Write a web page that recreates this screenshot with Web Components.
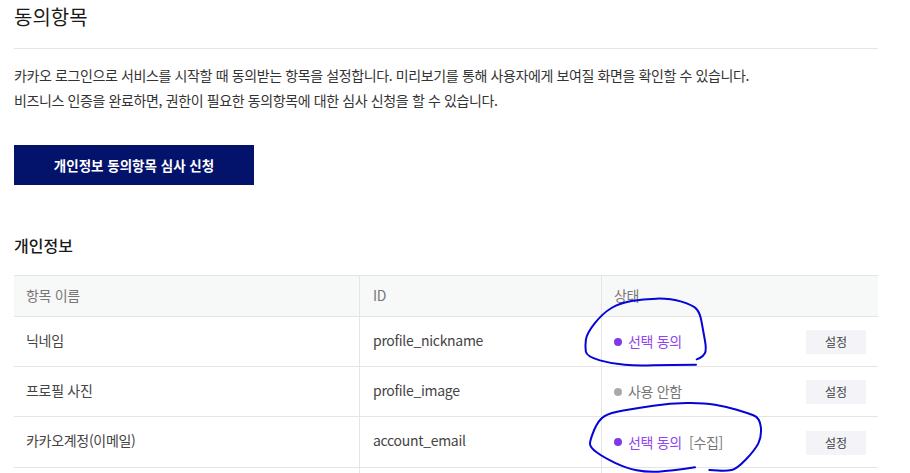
<!DOCTYPE html>
<html lang="ko">
<head>
<meta charset="utf-8">
<title>동의항목</title>
<style>
    html, body { margin: 0; height: 473px; overflow: hidden; background: #fff; }
    body { font-family: "Noto Sans CJK KR", "Noto Sans", sans-serif; color: #333; }
</style>
</head>
<body>
<consent-page>
    <consent-table>
        <consent-row name="닉네임" item-id="profile_nickname" status="on">선택 동의</consent-row>
        <consent-row name="프로필 사진" item-id="profile_image" status="off">사용 안함</consent-row>
        <consent-row name="카카오계정(이메일)" item-id="account_email" status="on" extra="[수집]">선택 동의</consent-row>
        <consent-row blank></consent-row>
    </consent-table>
</consent-page>
<ink-mark points="696,364.7 670,364.7 636.7,365.7 613,364 586.7,356.7 585,346.7 586.7,333.3 603,313 620,303 643,299 670,298.3 693,305 700,313 703,330 706.7,350 703,356.7 696.7,359.3"></ink-mark>
<ink-mark points="695,467.3 670,471 646.7,472.3 626.7,468.3 603.3,457.3 590,447.3 590,440 598.3,420 610,412.7 636.7,408.3 670,403.3 703.3,402.7 726.7,406.7 746.7,412.7 760,417.7 761.7,436.7 755,450 736.7,469 726.7,471 709.3,470"></ink-mark>
<script>
class ConsentPage extends HTMLElement {
    connectedCallback() {
        this.attachShadow({ mode: 'open' }).innerHTML = `
<style>
    :host { display: block; padding: 0 32px 0 14px; }
    h1 { margin: 0; height: 49px; box-sizing: border-box; padding-top: 2px; font-size: 20px; line-height: 30px; font-weight: 400; color: #1a1a1a; border-bottom: 1px solid #e5e5e5; }
    p { margin: 14px 0 0; font-size: 14px; line-height: 25px; color: #333; letter-spacing: -0.38px; }
    button { display: block; margin-top: 32px; width: 240px; height: 40px; padding: 0; border: 0; background: #03126b; color: #fff; font: 700 13.5px/40px "Noto Sans CJK KR", sans-serif; }
    h2 { margin: 48px 0 0; font-size: 16px; line-height: 24px; font-weight: 500; color: #1a1a1a; }
    .table { margin-top: 18px; }
</style>
<h1>동의항목</h1>
<p>카카오 로그인으로 서비스를 시작할 때 동의받는 항목을 설정합니다. 미리보기를 통해 사용자에게 보여질 화면을 확인할 수 있습니다.<br>비즈니스 인증을 완료하면, 권한이 필요한 동의항목에 대한 심사 신청을 할 수 있습니다.</p>
<button>개인정보 동의항목 심사 신청</button>
<h2>개인정보</h2>
<div class="table"><slot></slot></div>`;
    }
}

class ConsentTable extends HTMLElement {
    connectedCallback() {
        this.attachShadow({ mode: 'open' }).innerHTML = `
<style>
    :host { display: block; font-size: 14px; letter-spacing: -0.3px; }
    .head { display: grid; grid-template-columns: 345px 242px 1fr; height: 40px; background: #f7f8f8; border-top: 1px solid #e5e5e5; border-bottom: 1px solid #e5e5e5; color: #777; line-height: 38px; }
    .head div { padding-left: 12px; }
    .head div + div { border-left: 1px solid #e5e5e5; }
    .head div:nth-child(2) { padding-left: 13px; }
</style>
<div class="head"><div>항목 이름</div><div>ID</div><div>상태</div></div>
<slot></slot>`;
    }
}

class ConsentRow extends HTMLElement {
    connectedCallback() {
        const name = this.getAttribute('name') || '';
        const id = this.getAttribute('item-id') || '';
        const blank = this.hasAttribute('blank');
        const off = this.getAttribute('status') === 'off';
        const extra = this.getAttribute('extra');
        this.attachShadow({ mode: 'open' }).innerHTML = `
<style>
    :host { display: grid; grid-template-columns: 345px 242px 1fr; height: 49px; font-size: 14px; line-height: 47px; color: #444; border-bottom: 1px solid #e5e5e5; }
    :host(:nth-child(3)) { height: 50px; }
    :host(:nth-child(3)) button { margin-top: 2px; }
    :host([blank]) { border: 0; height: 5px; overflow: hidden; }
    .c { padding-left: 12px; }
    .c + .c { border-left: 1px solid #e5e5e5; }
    .id { padding-left: 13px; }
    .st { display: flex; align-items: center; padding-right: 12px; }
    i { width: 8px; height: 8px; border-radius: 50%; background: ${off ? '#aaa' : '#7c3aed'}; margin-right: 6px; }
    .lbl { color: ${off ? '#777' : '#8f45f0'}; }
    .x { color: #777; margin-left: 7px; }
    button { margin-left: auto; width: 60px; height: 24px; padding: 0; border: 0; background: #f3f3f8; color: #444; font: 400 12px/24px "Noto Sans CJK KR", sans-serif; }
</style>
<div class="c">${name}</div>
<div class="c id">${id}</div>
<div class="c st">${blank ? '' : `<i></i><span class="lbl"><slot></slot></span>${extra ? `<span class="x">${extra}</span>` : ''}<button>설정</button>`}</div>`;
    }
}

// hand drawn circles that sit over the table
class InkMark extends HTMLElement {
    connectedCallback() {
        const pts = this.getAttribute('points').split(' ').map(p => p.split(',').map(Number));
        let d = `M${pts[0][0]} ${pts[0][1]}`;
        for (let i = 1; i < pts.length - 1; i++) {
            const mx = (pts[i][0] + pts[i + 1][0]) / 2;
            const my = (pts[i][1] + pts[i + 1][1]) / 2;
            d += ` Q${pts[i][0]} ${pts[i][1]} ${mx} ${my}`;
        }
        const last = pts[pts.length - 1];
        d += ` L${last[0]} ${last[1]}`;
        this.attachShadow({ mode: 'open' }).innerHTML = `
<style>
    :host { position: absolute; left: 0; top: 0; width: 910px; height: 473px; pointer-events: none; }
    svg { display: block; }
</style>
<svg width="910" height="473" viewBox="0 0 910 473"><path d="${d}" fill="none" stroke="#0505d8" stroke-width="2" stroke-linecap="round"/></svg>`;
    }
}

customElements.define('consent-page', ConsentPage);
customElements.define('consent-table', ConsentTable);
customElements.define('consent-row', ConsentRow);
customElements.define('ink-mark', InkMark);
</script>
</body>
</html>
